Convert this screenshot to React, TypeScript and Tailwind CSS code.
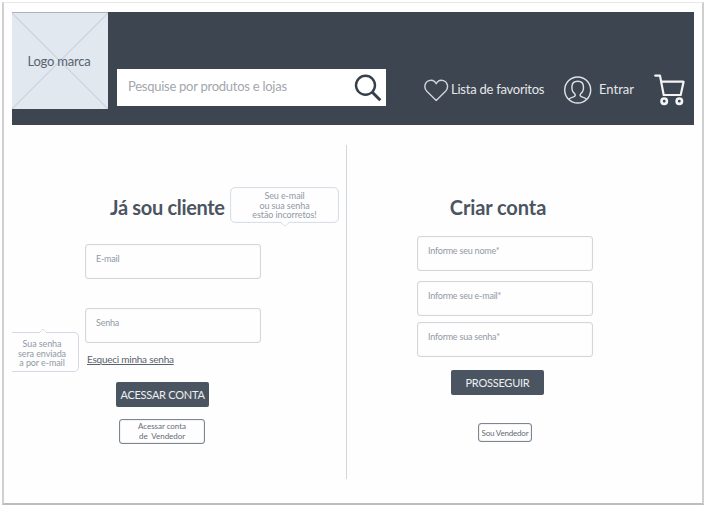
import React from 'react';

function LogoBox() {
  return (
    <div className="relative flex h-[97px] w-24 shrink-0 items-center justify-center border-t border-[#a9b1bb] bg-[#e1e8f0]">
      <svg className="absolute inset-0 h-full w-full" viewBox="0 0 96 97" preserveAspectRatio="none" fill="none" stroke="#ced5e0" strokeWidth="1.3">
        <path d="M0 0 96 97M96 0 0 97" />
      </svg>
      <span className="relative right-px text-[13px] leading-4 tracking-[-0.2px] whitespace-nowrap text-[#5a626d]">Logo marca</span>
    </div>
  );
}

function SearchIcon() {
  return (
    <svg className="h-7 w-7" viewBox="0 0 28 28" fill="none" stroke="#36404c">
      <circle cx="11.5" cy="11.3" r="9.5" strokeWidth="2.4" />
      <path d="m18.3 18.3 8 7.9" strokeWidth="3" />
    </svg>
  );
}

function HeartIcon() {
  return (
    <svg className="h-[23px] w-[25px]" viewBox="0 0 25 23" fill="none" stroke="#d0d4d8" strokeWidth="1.4" strokeLinejoin="round">
      <path d="M12.2 21.4 2.600 12C-.5 8.600.7 2.800 5 1.600c3-.8 5.800.4 7.200 3.200 1.400-2.800 4.200-4 7.200-3.200 4.300 1.200 5.500 7 2.400 10.400Z" />
    </svg>
  );
}

function UserIcon() {
  return (
    <svg className="h-7 w-7" viewBox="0 0 28 28" fill="none" stroke="#dfe2e5" strokeWidth="1.4" strokeLinejoin="round">
      <circle cx="13.700" cy="14" r="13" />
      <path d="M4.700 23.300c1.400-1.500 3.200-2 4.900-2.500 1.800-.6 2.100-1.700 1.200-3C8.700 16.300 7.800 13.600 7.900 11c.1-3.600 2.300-5.700 5.800-5.700s5.700 2.100 5.800 5.700c.1 2.600-.8 5.300-2.900 6.800-.9 1.300-.6 2.400 1.200 3 1.700.5 3.500 1 4.900 2.500" />
    </svg>
  );
}

function CartIcon() {
  return (
    <svg className="h-8 w-[31px]" viewBox="0 0 31 32" fill="none" stroke="#f3f4f5" strokeWidth="2.200" strokeLinecap="round" strokeLinejoin="round">
      <path d="M1.200 1.600h4.800L9.700 21h17L29.600 7.700H7.200" />
      <circle cx="10.200" cy="27.200" r="2.700" strokeWidth="2.600" />
      <circle cx="25.300" cy="27.200" r="2.700" strokeWidth="2.600" />
    </svg>
  );
}

function Field({ label, className = '' }: { label: string; className?: string }) {
  return (
    <div className={`h-[35px] w-44 rounded-[3px] border border-[#d3d7dc] pl-2.5 pt-2 text-[9px] leading-[11px] tracking-[-0.22px] text-[#9299a6] shadow-[inset_0_0_1px_#d3d7dc] ${className}`}>
      {label}
    </div>
  );
}

function LoginPanel() {
  return (
    <section className="relative h-[334px] w-[335px] shrink-0 border-r border-[#d3d6d9]">
      <div className="flex h-[78px] items-end">
        <h2 className="mb-1 ml-[98px] w-[120px] text-[20px] leading-6 font-bold tracking-[-0.32px] whitespace-nowrap text-[#4b5561]">Já sou cliente</h2>
        <div className="relative h-9 w-[109px] rounded-[5px] border border-[#d9dfe8] pt-[3px] text-center text-[9px] leading-[9.500px] tracking-[-0.1px] text-[#9299a6] shadow-[inset_0_0_1px_#d9dfe8]">
          <p>Seu e-mail</p>
          <p>ou sua senha</p>
          <p>estão incorretos!</p>
          <svg className="absolute top-[33px] left-[48px] h-[6px] w-3" viewBox="0 0 12 6">
            <path d="M1 0h10L6 5Z" fill="#fff" />
            <path d="m1 1 5 4 5-4" fill="none" stroke="#dbe1e9" />
          </svg>
        </div>
      </div>
      <Field label="E-mail" className="mt-[21px] ml-[73px]" />
      <Field label="Senha" className="mt-[29px] ml-[73px]" />
      <a className="mt-2 ml-[75px] block text-[10px] leading-4 tracking-[-0.24px] text-[#59616c] underline">Esqueci minha senha</a>
      <button className="mt-[15px] ml-26 block h-[25px] w-[93px] rounded-[2px] bg-[#4b5561] text-[11px] leading-[25px] tracking-[-0.25px] whitespace-nowrap text-[#eeeff1]">ACESSAR CONTA</button>
      <button className="mt-3 ml-[107px] block h-[25px] w-[86px] rounded-[3px] border border-[#7e858e] text-[8px] leading-[9.500px] tracking-[-0.05px] whitespace-pre text-[#656d77] shadow-[inset_0_0_1px_#7e858e]">
        <span className="block">Acessar conta</span>
        <span className="block">{'de  Vendedor'}</span>
      </button>
      <div className="absolute top-[187px] left-0 h-10 w-[67px] rounded-r-[5px] border border-l-0 border-[#d3d9e3] pt-[6px] pr-[6px] text-center text-[9px] leading-[9.700px] tracking-[-0.1px] text-[#9299a6]">
        <p>Sua senha</p>
        <p>sera enviada</p>
        <p>a por e-mail</p>
        <svg className="absolute -top-[5px] left-[25px] h-[6px] w-3" viewBox="0 0 12 6">
          <path d="M1 6h10L6 1Z" fill="#fff" />
          <path d="m2 5 4-4 4 4" fill="none" stroke="#dbe1e9" />
        </svg>
      </div>
    </section>
  );
}

function SignupPanel() {
  return (
    <section className="flex flex-1 flex-col pl-[70px]">
      <h2 className="mt-[50px] w-[162px] text-center text-[20px] leading-6 font-bold tracking-[-0.1px] text-[#4b5561]">Criar conta</h2>
      <Field label="Informe seu nome*" className="mt-[17px]" />
      <Field label="Informe seu e-mail*" className="mt-[10px]" />
      <Field label="Informe sua senha*" className="mt-[6px]" />
      <button className="mt-[13px] ml-[34px] h-[25px] w-[93px] rounded-[2px] bg-[#4b5561] text-[11px] leading-[25px] tracking-[-0.25px] text-[#eeeff1]">PROSSEGUIR</button>
      <button className="mt-7 ml-[61px] h-[19px] w-[54px] rounded-[3px] border border-[#7e858e] text-[8px] leading-4 tracking-[-0.2px] whitespace-nowrap text-[#656d77] shadow-[inset_0_0_1px_#7e858e]">Sou Vendedor</button>
    </section>
  );
}

export default function App() {
  return (
    <div className="h-[506px] w-[705px] overflow-hidden bg-white pt-[2px] pl-[2px] font-['Lato',sans-serif]">
      <div className="h-[503px] w-[702px] border-t border-r-2 border-b-2 border-l-2 border-t-[#e9e9e9] border-r-[#cfcfcf] border-b-[#bdbdbd] border-l-[#d0d0d0] bg-[#fefefe] pt-[9px] pl-2">
        <header className="flex h-[113px] w-[682px] bg-[#3c4550]">
          <LogoBox />
          <div className="mt-[57px] ml-[9px] flex h-[37px] w-[269px] shrink-0 items-center justify-between bg-white pr-1 pl-[11px]">
            <span className="pb-[3px] text-[13px] leading-5 tracking-[-0.26px] whitespace-nowrap text-[#a3a6ad]">Pesquise por produtos e lojas</span>
            <SearchIcon />
          </div>
          <div className="mt-[62px] ml-[38px] flex h-8 flex-1 items-center text-[13px] text-[#e5e7e9]">
            <HeartIcon />
            <span className="ml-[2px] w-[113px] tracking-[-0.24px] whitespace-nowrap">Lista de favoritos</span>
            <UserIcon />
            <span className="ml-[7px] w-[55px]">Entrar</span>
            <CartIcon />
          </div>
        </header>
        <main className="flex pt-5">
          <LoginPanel />
          <SignupPanel />
        </main>
      </div>
    </div>
  );
}
